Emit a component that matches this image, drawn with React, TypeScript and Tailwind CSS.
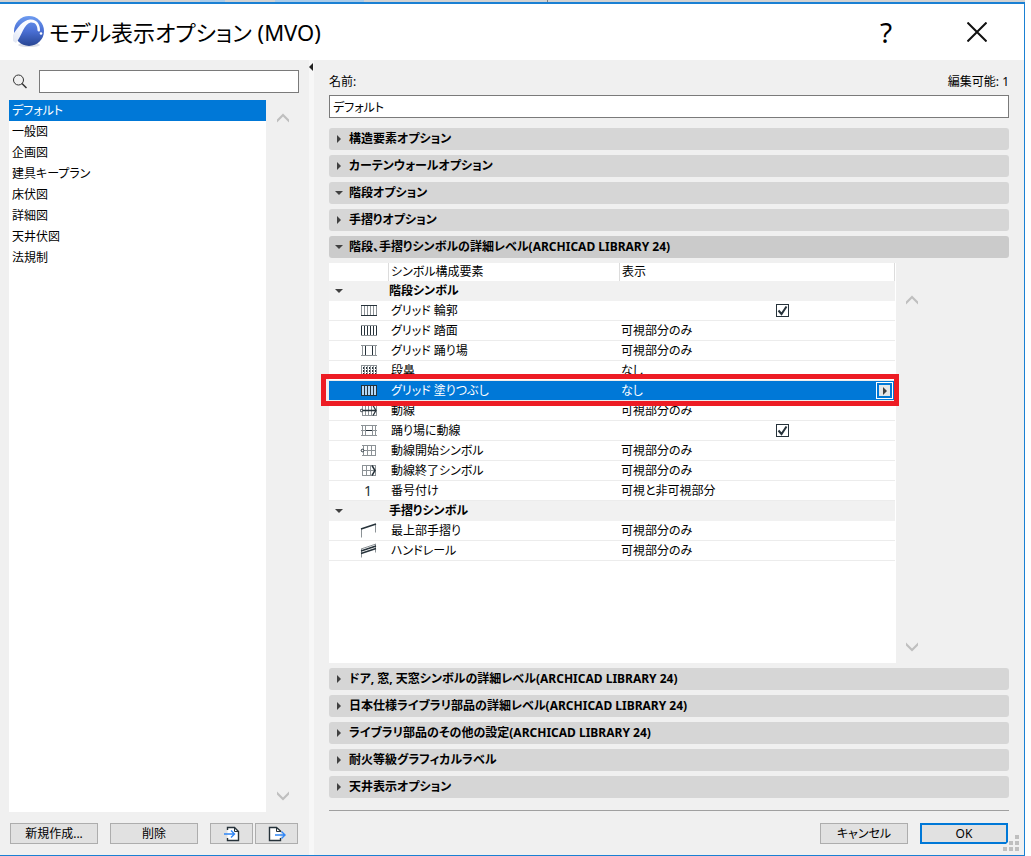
import type { ReactNode } from "react";
import clsx from "clsx";

const presets = [
  "デフォルト",
  "一般図",
  "企画図",
  "建具キープラン",
  "床伏図",
  "詳細図",
  "天井伏図",
  "法規制",
];

const topSections = [
  { label: "構造要素オプション", open: false },
  { label: "カーテンウォールオプション", open: false },
  { label: "階段オプション", open: true },
  { label: "手摺りオプション", open: false },
  { label: "階段、手摺りシンボルの詳細レベル(ARCHICAD LIBRARY 24)", open: true, active: true },
];

const bottomSections = [
  { label: "ドア, 窓, 天窓シンボルの詳細レベル(ARCHICAD LIBRARY 24)", open: false },
  { label: "日本仕様ライブラリ部品の詳細レベル(ARCHICAD LIBRARY 24)", open: false },
  { label: "ライブラリ部品のその他の設定(ARCHICAD LIBRARY 24)", open: false },
  { label: "耐火等級グラフィカルラベル", open: false },
  { label: "天井表示オプション", open: false },
];

type Row = {
  name: string;
  icon?: ReactNode;
  group?: boolean;
  value?: string;
  checked?: boolean;
  selected?: boolean;
};

const DARK = "#26323a";
const GRAY = "#8c9296";

function RowIcon({ children }: { children: ReactNode }) {
  return (
    <svg width="18" height="13" viewBox="0 0 18 13" fill="none" shapeRendering="crispEdges">
      {children}
    </svg>
  );
}

const rows: Row[] = [
  { name: "階段シンボル", group: true },
  {
    name: "グリッド 輪郭",
    checked: true,
    icon: (
      <RowIcon>
        <path d="M1.5 1v11M4.5 1v11M7.5 1v11M10.5 1v11M13.5 1v11M16.5 1v11" stroke={GRAY} />
        <path d="M1 1.5h16M1 11.5h16" stroke={DARK} />
      </RowIcon>
    ),
  },
  {
    name: "グリッド 踏面",
    value: "可視部分のみ",
    icon: (
      <RowIcon>
        <path d="M1 1.5h16M1 11.5h16" stroke={GRAY} />
        <path d="M1.5 2v9M4.5 2v9M7.5 2v9M10.5 2v9M13.5 2v9M16.5 2v9" stroke={DARK} />
      </RowIcon>
    ),
  },
  {
    name: "グリッド 踊り場",
    value: "可視部分のみ",
    icon: (
      <RowIcon>
        <path d="M1 1.5h16M1 11.5h16M2.5 1v11M15.5 1v11" stroke={GRAY} />
        <path d="M5.5 2v9M12.5 2v9" stroke={DARK} />
      </RowIcon>
    ),
  },
  {
    name: "段鼻",
    value: "なし",
    icon: (
      <RowIcon>
        <path d="M1 1.5h16M1 11.5h16M1.5 1v11M4.5 1v11M7.5 1v11M10.5 1v11M13.5 1v11M16.5 1v11" stroke={GRAY} />
        <path d="M3.5 3v9M6.5 3v9M9.5 3v9M12.5 3v9M15.5 3v9" stroke={DARK} strokeDasharray="2 1" />
      </RowIcon>
    ),
  },
  {
    name: "グリッド 塗りつぶし",
    value: "なし",
    selected: true,
    icon: (
      <RowIcon>
        <rect x="1.5" y="1.5" width="15" height="10" fill="#b5d7f6" stroke={DARK} />
        <path d="M4.5 2v9M7.5 2v9M10.5 2v9M13.5 2v9" stroke={DARK} />
      </RowIcon>
    ),
  },
  {
    name: "動線",
    value: "可視部分のみ",
    icon: (
      <svg width="18" height="13" viewBox="0 0 18 13" fill="none">
        <path d="M2 1.5h15M2 11.5h15M2.5 1v11M5.5 1v11M8.5 1v11M11.5 1v11M16.5 1v11" stroke={GRAY} />
        <path d="M2 6.500h14M13 1.500l3 5l-3 5" stroke={DARK} strokeWidth="1.300" />
        <circle cx="1.500" cy="6.500" r="1.200" fill="#fff" stroke={DARK} />
      </svg>
    ),
  },
  {
    name: "踊り場に動線",
    checked: true,
    icon: (
      <RowIcon>
        <path d="M1 1.5h16M1 11.5h16M2.5 1v11M5.5 1v11M12.5 1v11M15.5 1v11M1 6.5h4M13 6.5h4" stroke={GRAY} />
        <path d="M6 6.5h6" stroke={DARK} />
      </RowIcon>
    ),
  },
  {
    name: "動線開始シンボル",
    value: "可視部分のみ",
    icon: (
      <svg width="18" height="13" viewBox="0 0 18 13" fill="none">
        <path d="M2 1.500h14M3 6.500h13M2 11.500h14M3.500 1v11M7.500 1v11M11.500 1v11M15.500 1v11" stroke={GRAY} />
        <circle cx="2.500" cy="6.500" r="1.300" fill="#fff" stroke={DARK} />
      </svg>
    ),
  },
  {
    name: "動線終了シンボル",
    value: "可視部分のみ",
    icon: (
      <svg width="18" height="13" viewBox="0 0 18 13" fill="none">
        <path d="M2 1.500h14M2 6.500h13M2 11.500h14M2.500 1v11M6.500 1v11M10.500 1v11M15.500 1v11" stroke={GRAY} />
        <path d="M12 1.500l3 5l-3 5" stroke={DARK} strokeWidth="1.500" />
      </svg>
    ),
  },
  {
    name: "番号付け",
    value: "可視と非可視部分",
    icon: <span className="block w-[16px] text-center text-[14px] leading-[16px] text-[#26323a]">1</span>,
  },
  { name: "手摺りシンボル", group: true },
  {
    name: "最上部手摺り",
    value: "可視部分のみ",
    icon: (
      <svg width="18" height="15" viewBox="0 0 18 15" fill="none">
        <path d="M1.5 6v8.500M15.500 1v8.500" stroke={GRAY} />
        <path d="M1 6L16 1" stroke={DARK} strokeWidth="1.500" />
      </svg>
    ),
  },
  {
    name: "ハンドレール",
    value: "可視部分のみ",
    icon: (
      <svg width="18" height="15" viewBox="0 0 18 15" fill="none">
        <path d="M1.500 6v8.500M15.500 1v8.500M1 6L16 1" stroke={GRAY} />
        <path d="M1 8L16 3M1 10.500L16 5.500" stroke={DARK} strokeWidth="1.400" />
      </svg>
    ),
  },
];

function Triangle({ open }: { open: boolean }) {
  return (
    <svg width="8" height="8" viewBox="0 0 8 8" fill="#404040">
      {open ? <path d="M0 2h8L4 6z" /> : <path d="M2 0v8l4-4z" />}
    </svg>
  );
}

function ScrollButton({ down = false }: { down?: boolean }) {
  return (
    <button type="button" aria-label={down ? "下へ" : "上へ"} className="block">
      <svg width="12" height="10" viewBox="0 0 12 10" fill="#bfbfbf">
        {down ? <path d="M0 0.500v3l6 6l6-6v-3l-6 6z" /> : <path d="M0 9.500v-3l6-6l6 6v3l-6-6z" />}
      </svg>
    </button>
  );
}

function Section({ label, open, active }: { label: string; open: boolean; active?: boolean }) {
  return (
    <button
      type="button"
      aria-expanded={open}
      className={clsx(
        "flex h-[22px] shrink-0 items-center gap-[6px] rounded-[3px] pl-[6px] text-left font-bold",
        active ? "bg-[#cbcbcb]" : "bg-[#d6d6d6]"
      )}
    >
      <Triangle open={open} />
      <span>{label}</span>
    </button>
  );
}

function Checkbox({ label }: { label: string }) {
  return (
    <span className="relative mx-auto block h-[13px] w-[13px]">
      <input
        type="checkbox"
        aria-label={label}
        defaultChecked
        className="peer block h-[13px] w-[13px] appearance-none border border-[#26323a] bg-white"
      />
      <svg
        width="13"
        height="13"
        viewBox="0 0 13 13"
        fill="none"
        stroke="#26323a"
        strokeWidth="2"
        className="pointer-events-none absolute inset-0 hidden peer-checked:block"
      >
        <path d="M2.500 6.500l3 3.500l5-7.500" />
      </svg>
    </span>
  );
}

function SymbolTable() {
  return (
    <table className="w-full table-fixed border-separate border-spacing-0">
      <colgroup>
        <col className="w-[60px]" />
        <col className="w-[231px]" />
        <col />
      </colgroup>
      <thead>
        <tr className="h-[18px] text-left">
          <th className="border-r border-[#dcdcdc] p-0" />
          <th className="border-r border-[#dcdcdc] p-0 pl-[2px] font-normal">シンボル構成要素</th>
          <th className="border-r border-[#dcdcdc] p-0 pl-[2px] font-normal">表示</th>
        </tr>
      </thead>
      <tbody>
        {rows.map((row) =>
          row.group ? (
            <tr key={row.name} className="h-[20px] bg-[#f1f1f1] text-left">
              <td className="p-0 pl-[6px]">
                <Triangle open />
              </td>
              <th colSpan={2} className="p-0 font-bold">
                {row.name}
              </th>
            </tr>
          ) : (
            <tr
              key={row.name}
              className={clsx(
                "relative h-[20px] *:border-b *:border-[#ececec]",
                row.selected && "bg-[#0078d7] text-white"
              )}
            >
              <td className="p-0 pl-[31px]">
                {row.icon}
                {row.selected && (
                  <span className="pointer-events-none absolute -top-[7px] -right-[4px] -bottom-[5px] -left-[8px] z-10 border-[5px] border-[#ed1c24]" />
                )}
              </td>
              <td className="p-0 pl-[2px]">{row.name}</td>
              <td className="p-0 pl-[1px]">
                {row.checked ? (
                  <div className="pl-[48px]">
                    <Checkbox label={row.name} />
                  </div>
                ) : (
                  <div className="flex items-center justify-between">
                    <span>{row.value}</span>
                    {row.selected && (
                      <button
                        type="button"
                        aria-label="選択"
                        className="mr-[2px] flex h-[17px] w-[17px] items-center justify-center border border-white"
                      >
                        <span className="flex h-[11px] w-[11px] items-center justify-center bg-[#e6e6e6]">
                          <Triangle open={false} />
                        </span>
                      </button>
                    )}
                  </div>
                )}
              </td>
            </tr>
          )
        )}
      </tbody>
    </table>
  );
}

function Logo() {
  return (
    <svg width="32" height="34" viewBox="0 0 32 34">
      <defs>
        <linearGradient id="ball" x1="0" y1="0" x2="0" y2="1">
          <stop offset="0" stopColor="#6d9bf0" />
          <stop offset="0.5" stopColor="#4a6fd4" />
          <stop offset="1" stopColor="#274592" />
        </linearGradient>
        <linearGradient id="sweep" x1="0" y1="1" x2="1" y2="0">
          <stop offset="0" stopColor="#dfe4f0" />
          <stop offset="0.4" stopColor="#f4f7ff" />
          <stop offset="1" stopColor="#ffffff" />
        </linearGradient>
      </defs>
      <ellipse cx="16" cy="30" rx="11" ry="2" fill="#dcdfe8" />
      <circle cx="16" cy="16" r="15" fill="url(#ball)" />
      <path
        d="M0 20C4 13 10 5 17 4.500c7-0.500 10 5 10 10.500c0 2-2 2-2.500 0.500c0-5-2-8.500-7-8C11 9 9 20 3 28L0 26z"
        fill="url(#sweep)"
      />
      <circle cx="28" cy="18.500" r="1.300" fill="#fff" />
    </svg>
  );
}

const btn = "flex h-[21px] items-center justify-center border border-[#adadad] bg-[#e1e1e1]";

export default function App() {
  return (
    <div
      lang="ja"
      className="flex h-screen flex-col bg-white pr-[6px] font-['Noto_Sans','Noto_Sans_CJK_JP',sans-serif] text-[12px] leading-[16px] text-black [font-feature-settings:'palt']"
    >
      {/* Edge of the window behind the dialog */}
      <div className="flex h-[2px] shrink-0 bg-[#d2d2d2]">
        <div className="ml-[200px] w-[25px] bg-[#aacbe8]" />
        <div className="ml-[50px] w-[89px] bg-[#aacbe8]" />
        <div className="ml-[183px] w-px bg-[#808080]" />
      </div>

      <div className="flex min-h-0 flex-1 flex-col border-t-2 border-r border-b border-[#1a80d3] bg-[#f0f0f0]">
        {/* Title bar */}
        <header className="flex h-14 shrink-0 items-center bg-white pr-[37px] pl-[13px]">
          <Logo />
          <h1 className="flex-1 pl-[4px] text-[22px] leading-[32px]">モデル表示オプション (MVO)</h1>
          <button type="button" aria-label="ヘルプ" className="w-[24px] text-[28px] leading-[32px]">
            ?
          </button>
          <button type="button" aria-label="閉じる" className="ml-[69px]">
            <svg width="20" height="20" viewBox="0 0 20 20" stroke="#111" strokeWidth="2">
              <path d="M0.500 0.500l19 19M19.500 0.500l-19 19" />
            </svg>
          </button>
        </header>

        <div className="flex min-h-0 flex-1">
          {/* Preset list */}
          <aside className="flex w-[309px] shrink-0 flex-col pt-[10px] pr-[10px] pb-[11px] pl-[9px]">
            <div className="flex items-center">
              <svg width="16" height="16" viewBox="0 0 16 16" fill="none" stroke="#333" className="ml-[3px]">
                <circle cx="6.500" cy="6" r="5" />
                <path d="M10 9.500l4.500 4.500" strokeWidth="1.500" />
              </svg>
              <input
                type="text"
                aria-label="検索"
                className="ml-[11px] h-[23px] min-w-0 flex-1 border border-[#7a7a7a] bg-white px-1"
              />
            </div>
            <div className="mt-[7px] flex min-h-0 flex-1">
              <ul className="min-w-0 flex-1 bg-white">
                {presets.map((name, i) => (
                  <li
                    key={name}
                    className={clsx("flex h-[21px] items-center pl-[3px]", i === 0 && "bg-[#0078d7] text-white")}
                  >
                    {name}
                  </li>
                ))}
              </ul>
              <div className="flex w-[33px] flex-col items-center justify-between pt-[13px] pb-[11px]">
                <ScrollButton />
                <ScrollButton down />
              </div>
            </div>
            <div className="mt-[11px] flex pl-px">
              <button type="button" className={clsx(btn, "w-[88px]")}>
                新規作成...
              </button>
              <button type="button" className={clsx(btn, "ml-3 w-[88px]")}>
                削除
              </button>
              <button type="button" aria-label="読み込み" className={clsx(btn, "ml-3 w-[43px]")}>
                <svg width="18" height="16" viewBox="0 0 18 16" fill="none">
                  <path d="M4.500 4V1.500h7l4 4v9h-11V12" fill="#fff" stroke={DARK} strokeWidth="1.400" />
                  <path d="M11.500 1.500v4h4" stroke={DARK} />
                  <path d="M1 8h10M8 4.500l3.500 3.500L8 11.500" stroke="#2f86f6" strokeWidth="1.400" />
                </svg>
              </button>
              <button type="button" aria-label="書き出し" className={clsx(btn, "ml-[2px] w-[43px]")}>
                <svg width="18" height="16" viewBox="0 0 18 16" fill="none">
                  <path d="M12.500 6V5l-4-3.500h-7v13h11V12" fill="#fff" stroke={DARK} strokeWidth="1.400" />
                  <path d="M8.500 1.500v4h4" stroke={DARK} />
                  <path d="M7 9h10M13.500 5.500L17 9l-3.500 3.500" stroke="#2f86f6" strokeWidth="1.400" />
                </svg>
              </button>
            </div>
          </aside>

          {/* Splitter */}
          <div className="w-[5px] shrink-0 bg-[#f7f7f7] pt-[3px]">
            <svg width="4" height="8" viewBox="0 0 4 8" fill="#222">
              <path d="M4 0v8L0 4z" />
            </svg>
          </div>

          <main className="flex min-w-0 flex-1 flex-col pt-[14px] pr-[15px] pb-[11px] pl-[15px]">
            <div className="flex justify-between">
              <label htmlFor="name">名前:</label>
              <span>編集可能: 1</span>
            </div>
            <input
              id="name"
              type="text"
              defaultValue="デフォルト"
              className="mt-[5px] h-[23px] shrink-0 border border-[#7a7a7a] bg-white px-[3px]"
            />

            <div className="mt-[10px] flex min-h-0 flex-1 flex-col gap-[5px]">
              {topSections.map((s) => (
                <Section key={s.label} {...s} />
              ))}
              <div className="flex min-h-0 flex-1">
                <div className="min-w-0 flex-1 bg-white pr-px">
                  <SymbolTable />
                </div>
                <div className="flex w-[113px] flex-col justify-between pt-[32px] pb-[11px] pl-[10px]">
                  <ScrollButton />
                  <ScrollButton down />
                </div>
              </div>
              {bottomSections.map((s) => (
                <Section key={s.label} {...s} />
              ))}
            </div>

            <div className="mt-[12px] flex shrink-0 justify-end gap-3 border-t border-[#a0a0a0] pt-[12px] pr-px">
              <button type="button" className={clsx(btn, "w-[88px]")}>
                キャンセル
              </button>
              <div className="relative">
                <button
                  type="button"
                  className="flex h-[21px] w-[88px] items-center justify-center border-2 border-[#0078d7] bg-[#e1e1e1]"
                >
                  OK
                </button>
                {/* Resize grip */}
                <svg
                  width="17"
                  height="17"
                  viewBox="0 0 17 17"
                  className="absolute -right-[12px] -bottom-[8px]"
                >
                  <path d="M0 12L12 0h5v17H0z" fill="#f0f0f0" />
                  <path
                    d="M12 0h4v4h-4zM6 6h4v4H6zM12 6h4v4h-4zM0 12h4v4H0zM6 12h4v4H6zM12 12h4v4h-4z"
                    fill="#bfbfbf"
                  />
                </svg>
              </div>
            </div>
          </main>
        </div>
      </div>
    </div>
  );
}
